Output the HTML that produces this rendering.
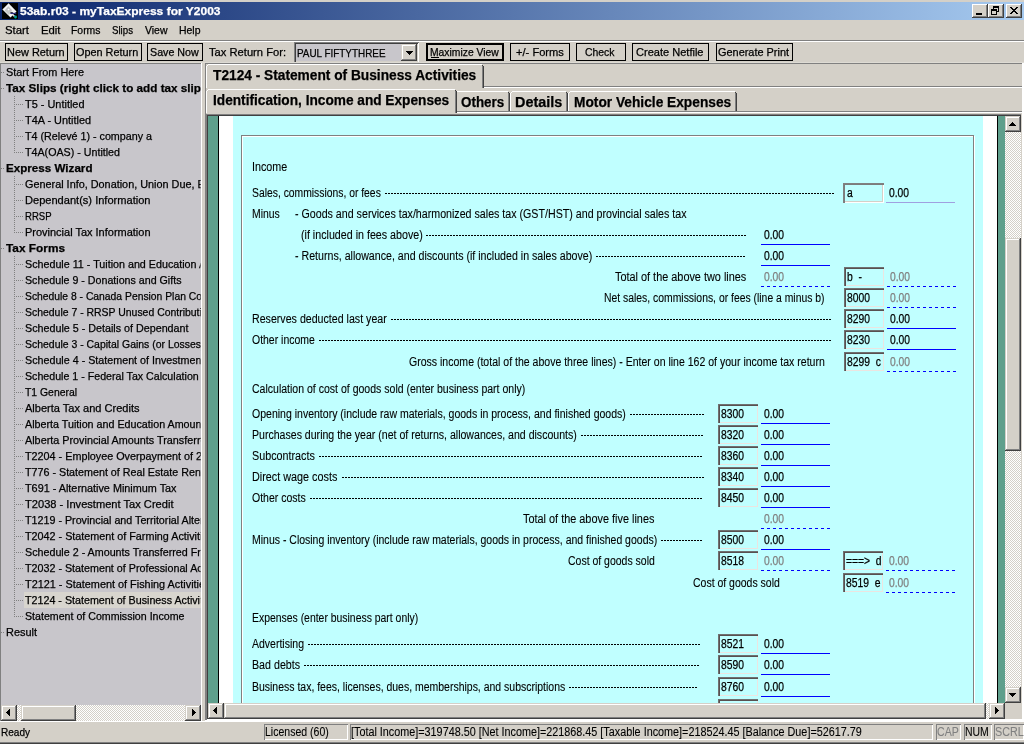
<!DOCTYPE html>
<html><head><meta charset="utf-8"><title>myTaxExpress</title>
<style>
html,body{margin:0;padding:0}
body{width:1024px;height:744px;background:#d4d0c8;position:relative;overflow:hidden;font-family:'Liberation Sans',sans-serif}
div,svg,span{position:absolute;display:block}
span{white-space:pre;transform-origin:0 0;-webkit-text-stroke:0.25px currentColor}
</style></head><body>
<div style="left:0px;top:2px;width:1024px;height:18px;background:linear-gradient(to right,#0a246a 0%,#a6caf0 100%);"></div>
<svg style="left:2px;top:3px" width="16" height="16" viewBox="0 0 16 16"><rect width="16" height="16" fill="#000"/><path d="M6.6 0.3 L14.5 8.5 L8.5 14.5 L0.4 6.6 Z" fill="#f4f4f4"/><path d="M6.3 3.2 L10 7 L9 10 L6.8 12 L2.6 7.4Z" fill="#c6c6c6"/><path d="M5.5 6.6l1.2 -1.2 1 1 -1.2 1.2z" fill="#fff"/><path d="M8.7 9.1 L10.8 8.9 L10.9 9.8 L8.4 9.8Z" fill="#000"/><path d="M8.4 10.4 L14.2 10.4" stroke="#2c2c7c" stroke-width="1.2"/><path d="M9.6 11.5l2 0 1.6 1.6 -1.2 1z" fill="#e0e0e0"/><circle cx="13.5" cy="14" r="1.45" fill="#00a098"/><path d="M12.3 15.2h2.4l-1.2 0.8z" fill="#008000"/></svg>
<div style="left:972px;top:4px;width:16px;height:14px;background:#d4d0c8;box-shadow:inset -1px -1px 0 #404040,inset 1px 1px 0 #fff,inset -2px -2px 0 #808080"></div>
<div style="left:976px;top:13px;width:6px;height:2px;background:#000;"></div>
<div style="left:988px;top:4px;width:16px;height:14px;background:#d4d0c8;box-shadow:inset -1px -1px 0 #404040,inset 1px 1px 0 #fff,inset -2px -2px 0 #808080"></div>
<svg style="left:991px;top:6px" width="8" height="9" shape-rendering="crispEdges"><path d="M2 0h6v1h-6zM2 1h6v1h-6zM2 2h1v1h-1zM7 2h1v1h-1zM0 3h6v1h-6zM7 3h1v1h-1zM0 4h6v1h-6zM7 4h1v1h-1zM0 5h1v1h-1zM5 5h3v1h-3zM0 6h1v1h-1zM5 6h1v1h-1zM0 7h1v1h-1zM5 7h1v1h-1zM0 8h6v1h-6z" fill="#000"/></svg>
<div style="left:1006px;top:4px;width:16px;height:14px;background:#d4d0c8;box-shadow:inset -1px -1px 0 #404040,inset 1px 1px 0 #fff,inset -2px -2px 0 #808080"></div>
<svg style="left:1010px;top:7px" width="8" height="7" shape-rendering="crispEdges"><path d="M0 0h2v1h-2zM6 0h2v1h-2zM1 1h2v1h-2zM5 1h2v1h-2zM2 2h4v1h-4zM3 3h2v1h-2zM2 4h4v1h-4zM1 5h2v1h-2zM5 5h2v1h-2zM0 6h2v1h-2zM6 6h2v1h-2z" fill="#000"/></svg>
<div style="left:0px;top:40px;width:1024px;height:1px;background:#808080;"></div>
<div style="left:0px;top:41px;width:1024px;height:1px;background:#fff;"></div>
<div style="left:5px;top:43px;width:63px;height:18px;background:#000;"></div>
<div style="left:6px;top:44px;width:61px;height:16px;background:#d4d0c8;"></div>
<div style="left:74px;top:43px;width:68px;height:18px;background:#000;"></div>
<div style="left:75px;top:44px;width:66px;height:16px;background:#d4d0c8;"></div>
<div style="left:147px;top:43px;width:56px;height:18px;background:#000;"></div>
<div style="left:148px;top:44px;width:54px;height:16px;background:#d4d0c8;"></div>
<div style="left:294px;top:42px;width:125px;height:21px;background:#c8c6cb;box-shadow:inset 1px 1px 0 #808080,inset -1px -1px 0 #fff,inset 2px 2px 0 #404040,inset -2px -2px 0 #d4d0c8"></div>
<div style="left:401px;top:44px;width:16px;height:17px;background:#d4d0c8;box-shadow:inset -1px -1px 0 #404040,inset 1px 1px 0 #d4d0c8,inset -2px -2px 0 #808080,inset 2px 2px 0 #fff"></div>
<svg style="left:406px;top:51px" width="7" height="4" shape-rendering="crispEdges"><path d="M0 0h7v1h-7zM1 1h5v1h-5zM2 2h3v1h-3zM3 3h1v1h-1z" fill="#000"/></svg>
<div style="left:426px;top:43px;width:78px;height:18px;background:#000;"></div>
<div style="left:428px;top:45px;width:74px;height:14px;background:#d4d0c8;"></div>
<div style="left:431px;top:57px;width:8px;height:1px;background:#000;"></div>
<div style="left:510px;top:43px;width:60px;height:18px;background:#000;"></div>
<div style="left:511px;top:44px;width:58px;height:16px;background:#d4d0c8;"></div>
<div style="left:576px;top:43px;width:50px;height:18px;background:#000;"></div>
<div style="left:577px;top:44px;width:48px;height:16px;background:#d4d0c8;"></div>
<div style="left:632px;top:43px;width:77px;height:18px;background:#000;"></div>
<div style="left:633px;top:44px;width:75px;height:16px;background:#d4d0c8;"></div>
<div style="left:716px;top:43px;width:77px;height:18px;background:#000;"></div>
<div style="left:717px;top:44px;width:75px;height:16px;background:#d4d0c8;"></div>
<div style="left:0px;top:63px;width:201px;height:1px;background:#808080;"></div>
<div style="left:205px;top:63px;width:817px;height:1px;background:#808080;"></div>
<div style="left:205px;top:63px;width:1px;height:658px;background:#808080;"></div>
<div style="left:1022px;top:63px;width:2px;height:659px;background:#fff;"></div>
<div style="left:0px;top:62px;width:1024px;height:1px;background:#dedbd4;"></div>
<div style="left:0px;top:64px;width:1px;height:657px;background:#808080;"></div>
<div style="left:1px;top:64px;width:200px;height:641px;background:#c8c6cb;"></div>
<div style="left:201px;top:63px;width:1px;height:659px;background:#fff;"></div>
<div style="left:0px;top:721px;width:202px;height:1px;background:#fff;"></div>
<div style="left:1px;top:72px;width:4px;height:1px;background:repeating-linear-gradient(to right,#808080 0,#808080 1px,transparent 1px,transparent 2px)"></div>
<div style="left:1px;top:88px;width:4px;height:1px;background:repeating-linear-gradient(to right,#808080 0,#808080 1px,transparent 1px,transparent 2px)"></div>
<div style="left:14px;top:104px;width:9px;height:1px;background:repeating-linear-gradient(to right,#808080 0,#808080 1px,transparent 1px,transparent 2px)"></div>
<div style="left:14px;top:120px;width:9px;height:1px;background:repeating-linear-gradient(to right,#808080 0,#808080 1px,transparent 1px,transparent 2px)"></div>
<div style="left:14px;top:136px;width:9px;height:1px;background:repeating-linear-gradient(to right,#808080 0,#808080 1px,transparent 1px,transparent 2px)"></div>
<div style="left:14px;top:152px;width:9px;height:1px;background:repeating-linear-gradient(to right,#808080 0,#808080 1px,transparent 1px,transparent 2px)"></div>
<div style="left:1px;top:168px;width:4px;height:1px;background:repeating-linear-gradient(to right,#808080 0,#808080 1px,transparent 1px,transparent 2px)"></div>
<div style="left:14px;top:184px;width:9px;height:1px;background:repeating-linear-gradient(to right,#808080 0,#808080 1px,transparent 1px,transparent 2px)"></div>
<div style="left:14px;top:200px;width:9px;height:1px;background:repeating-linear-gradient(to right,#808080 0,#808080 1px,transparent 1px,transparent 2px)"></div>
<div style="left:14px;top:216px;width:9px;height:1px;background:repeating-linear-gradient(to right,#808080 0,#808080 1px,transparent 1px,transparent 2px)"></div>
<div style="left:14px;top:232px;width:9px;height:1px;background:repeating-linear-gradient(to right,#808080 0,#808080 1px,transparent 1px,transparent 2px)"></div>
<div style="left:1px;top:248px;width:4px;height:1px;background:repeating-linear-gradient(to right,#808080 0,#808080 1px,transparent 1px,transparent 2px)"></div>
<div style="left:14px;top:264px;width:9px;height:1px;background:repeating-linear-gradient(to right,#808080 0,#808080 1px,transparent 1px,transparent 2px)"></div>
<div style="left:14px;top:280px;width:9px;height:1px;background:repeating-linear-gradient(to right,#808080 0,#808080 1px,transparent 1px,transparent 2px)"></div>
<div style="left:14px;top:296px;width:9px;height:1px;background:repeating-linear-gradient(to right,#808080 0,#808080 1px,transparent 1px,transparent 2px)"></div>
<div style="left:14px;top:312px;width:9px;height:1px;background:repeating-linear-gradient(to right,#808080 0,#808080 1px,transparent 1px,transparent 2px)"></div>
<div style="left:14px;top:328px;width:9px;height:1px;background:repeating-linear-gradient(to right,#808080 0,#808080 1px,transparent 1px,transparent 2px)"></div>
<div style="left:14px;top:344px;width:9px;height:1px;background:repeating-linear-gradient(to right,#808080 0,#808080 1px,transparent 1px,transparent 2px)"></div>
<div style="left:14px;top:360px;width:9px;height:1px;background:repeating-linear-gradient(to right,#808080 0,#808080 1px,transparent 1px,transparent 2px)"></div>
<div style="left:14px;top:376px;width:9px;height:1px;background:repeating-linear-gradient(to right,#808080 0,#808080 1px,transparent 1px,transparent 2px)"></div>
<div style="left:14px;top:392px;width:9px;height:1px;background:repeating-linear-gradient(to right,#808080 0,#808080 1px,transparent 1px,transparent 2px)"></div>
<div style="left:14px;top:408px;width:9px;height:1px;background:repeating-linear-gradient(to right,#808080 0,#808080 1px,transparent 1px,transparent 2px)"></div>
<div style="left:14px;top:424px;width:9px;height:1px;background:repeating-linear-gradient(to right,#808080 0,#808080 1px,transparent 1px,transparent 2px)"></div>
<div style="left:14px;top:440px;width:9px;height:1px;background:repeating-linear-gradient(to right,#808080 0,#808080 1px,transparent 1px,transparent 2px)"></div>
<div style="left:14px;top:456px;width:9px;height:1px;background:repeating-linear-gradient(to right,#808080 0,#808080 1px,transparent 1px,transparent 2px)"></div>
<div style="left:14px;top:472px;width:9px;height:1px;background:repeating-linear-gradient(to right,#808080 0,#808080 1px,transparent 1px,transparent 2px)"></div>
<div style="left:14px;top:488px;width:9px;height:1px;background:repeating-linear-gradient(to right,#808080 0,#808080 1px,transparent 1px,transparent 2px)"></div>
<div style="left:14px;top:504px;width:9px;height:1px;background:repeating-linear-gradient(to right,#808080 0,#808080 1px,transparent 1px,transparent 2px)"></div>
<div style="left:14px;top:520px;width:9px;height:1px;background:repeating-linear-gradient(to right,#808080 0,#808080 1px,transparent 1px,transparent 2px)"></div>
<div style="left:14px;top:536px;width:9px;height:1px;background:repeating-linear-gradient(to right,#808080 0,#808080 1px,transparent 1px,transparent 2px)"></div>
<div style="left:14px;top:552px;width:9px;height:1px;background:repeating-linear-gradient(to right,#808080 0,#808080 1px,transparent 1px,transparent 2px)"></div>
<div style="left:14px;top:568px;width:9px;height:1px;background:repeating-linear-gradient(to right,#808080 0,#808080 1px,transparent 1px,transparent 2px)"></div>
<div style="left:14px;top:584px;width:9px;height:1px;background:repeating-linear-gradient(to right,#808080 0,#808080 1px,transparent 1px,transparent 2px)"></div>
<div style="left:24px;top:592px;width:177px;height:16px;background:#d8d5ce"></div>
<div style="left:14px;top:600px;width:9px;height:1px;background:repeating-linear-gradient(to right,#808080 0,#808080 1px,transparent 1px,transparent 2px)"></div>
<div style="left:14px;top:616px;width:9px;height:1px;background:repeating-linear-gradient(to right,#808080 0,#808080 1px,transparent 1px,transparent 2px)"></div>
<div style="left:1px;top:632px;width:4px;height:1px;background:repeating-linear-gradient(to right,#808080 0,#808080 1px,transparent 1px,transparent 2px)"></div>
<div style="left:14px;top:96px;width:1px;height:57px;background:repeating-linear-gradient(to bottom,#808080 0,#808080 1px,transparent 1px,transparent 2px)"></div>
<div style="left:14px;top:176px;width:1px;height:57px;background:repeating-linear-gradient(to bottom,#808080 0,#808080 1px,transparent 1px,transparent 2px)"></div>
<div style="left:14px;top:256px;width:1px;height:361px;background:repeating-linear-gradient(to bottom,#808080 0,#808080 1px,transparent 1px,transparent 2px)"></div>
<div style="left:1px;top:705px;width:200px;height:16px;background:repeating-conic-gradient(#fff 0% 25%, #d4d0c8 0% 50%) 0 0/2px 2px;"></div>
<div style="left:1px;top:705px;width:16px;height:16px;background:#d4d0c8;box-shadow:inset -1px -1px 0 #404040,inset 1px 1px 0 #d4d0c8,inset -2px -2px 0 #808080,inset 2px 2px 0 #fff"></div>
<svg style="left:6px;top:709px" width="4" height="7" shape-rendering="crispEdges"><path d="M3 0h1v1h-1zM2 1h2v1h-2zM1 2h3v1h-3zM0 3h4v1h-4zM1 4h3v1h-3zM2 5h2v1h-2zM3 6h1v1h-1z" fill="#000"/></svg>
<div style="left:21px;top:705px;width:55px;height:16px;background:#d4d0c8;box-shadow:inset -1px -1px 0 #404040,inset 1px 1px 0 #d4d0c8,inset -2px -2px 0 #808080,inset 2px 2px 0 #fff"></div>
<div style="left:185px;top:705px;width:16px;height:16px;background:#d4d0c8;box-shadow:inset -1px -1px 0 #404040,inset 1px 1px 0 #d4d0c8,inset -2px -2px 0 #808080,inset 2px 2px 0 #fff"></div>
<svg style="left:192px;top:709px" width="4" height="7" shape-rendering="crispEdges"><path d="M0 0h1v1h-1zM0 1h2v1h-2zM0 2h3v1h-3zM0 3h4v1h-4zM0 4h3v1h-3zM0 5h2v1h-2zM0 6h1v1h-1z" fill="#000"/></svg>
<div style="left:206px;top:66px;width:1px;height:22px;background:#fff;"></div>
<div style="left:207px;top:65px;width:1px;height:1px;background:#fff;"></div>
<div style="left:208px;top:64px;width:274px;height:1px;background:#fff;"></div>
<div style="left:482px;top:65px;width:1px;height:1px;background:#404040;"></div>
<div style="left:483px;top:66px;width:1px;height:22px;background:#404040;"></div>
<div style="left:482px;top:66px;width:1px;height:22px;background:#808080;"></div>
<div style="left:484px;top:86px;width:538px;height:1px;background:#808080;"></div>
<div style="left:484px;top:87px;width:538px;height:1px;background:#fff;"></div>
<div style="left:457px;top:91px;width:51px;height:1px;background:#fff;"></div>
<div style="left:508px;top:92px;width:1px;height:1px;background:#404040;"></div>
<div style="left:509px;top:93px;width:1px;height:18px;background:#404040;"></div>
<div style="left:508px;top:93px;width:1px;height:18px;background:#808080;"></div>
<div style="left:510px;top:93px;width:1px;height:18px;background:#fff;"></div>
<div style="left:511px;top:92px;width:1px;height:1px;background:#fff;"></div>
<div style="left:512px;top:91px;width:54px;height:1px;background:#fff;"></div>
<div style="left:566px;top:92px;width:1px;height:1px;background:#404040;"></div>
<div style="left:567px;top:93px;width:1px;height:18px;background:#404040;"></div>
<div style="left:566px;top:93px;width:1px;height:18px;background:#808080;"></div>
<div style="left:568px;top:93px;width:1px;height:18px;background:#fff;"></div>
<div style="left:569px;top:92px;width:1px;height:1px;background:#fff;"></div>
<div style="left:570px;top:91px;width:165px;height:1px;background:#fff;"></div>
<div style="left:735px;top:92px;width:1px;height:1px;background:#404040;"></div>
<div style="left:736px;top:93px;width:1px;height:18px;background:#404040;"></div>
<div style="left:735px;top:93px;width:1px;height:18px;background:#808080;"></div>
<div style="left:457px;top:111px;width:565px;height:1px;background:#808080;"></div>
<div style="left:457px;top:112px;width:565px;height:1px;background:#fff;"></div>
<div style="left:206px;top:91px;width:1px;height:22px;background:#fff;"></div>
<div style="left:207px;top:90px;width:1px;height:1px;background:#fff;"></div>
<div style="left:208px;top:89px;width:247px;height:1px;background:#fff;"></div>
<div style="left:455px;top:90px;width:1px;height:1px;background:#404040;"></div>
<div style="left:456px;top:91px;width:1px;height:22px;background:#404040;"></div>
<div style="left:455px;top:91px;width:1px;height:22px;background:#808080;"></div>
<div style="left:206px;top:114px;width:816px;height:606px;background:#808080;"></div>
<div style="left:207px;top:115px;width:815px;height:605px;background:#404040;"></div>
<div style="left:1021px;top:114px;width:1px;height:607px;background:#d4d0c8;"></div>
<div style="left:205px;top:720px;width:819px;height:2px;background:#fff;"></div>
<div style="left:207px;top:719px;width:815px;height:1px;background:#fff;"></div>
<div style="left:208px;top:116px;width:813px;height:603px;background:#d4d0c8;"></div>
<div style="left:208px;top:116px;width:797px;height:587px;background:#5f9f8c;"></div>
<div style="left:218px;top:116px;width:780px;height:587px;background:#000;"></div>
<div style="left:219px;top:116px;width:778px;height:587px;background:#fff;"></div>
<div style="left:233px;top:116px;width:750px;height:587px;background:#c0ffff;"></div>
<div style="left:241px;top:135px;width:733px;height:600px;border:1px solid #808080;box-shadow:inset 1px 1px 0 #fff,1px 1px 0 #fff;box-sizing:border-box;clip-path:inset(0 -1px 32px 0)"></div>
<div style="left:1005px;top:116px;width:16px;height:587px;background:repeating-conic-gradient(#d4d0c8 0% 25%, #fff 0% 50%) 0 0/2px 2px;"></div>
<div style="left:1005px;top:116px;width:16px;height:16px;background:#d4d0c8;box-shadow:inset -1px -1px 0 #404040,inset 1px 1px 0 #d4d0c8,inset -2px -2px 0 #808080,inset 2px 2px 0 #fff"></div>
<svg style="left:1009px;top:122px" width="7" height="4" shape-rendering="crispEdges"><path d="M3 0h1v1h-1zM2 1h3v1h-3zM1 2h5v1h-5zM0 3h7v1h-7z" fill="#000"/></svg>
<div style="left:1005px;top:238px;width:16px;height:213px;background:#d4d0c8;box-shadow:inset -1px -1px 0 #404040,inset 1px 1px 0 #d4d0c8,inset -2px -2px 0 #808080,inset 2px 2px 0 #fff"></div>
<div style="left:1005px;top:687px;width:16px;height:16px;background:#d4d0c8;box-shadow:inset -1px -1px 0 #404040,inset 1px 1px 0 #d4d0c8,inset -2px -2px 0 #808080,inset 2px 2px 0 #fff"></div>
<svg style="left:1009px;top:693px" width="7" height="4" shape-rendering="crispEdges"><path d="M0 0h7v1h-7zM1 1h5v1h-5zM2 2h3v1h-3zM3 3h1v1h-1z" fill="#000"/></svg>
<div style="left:208px;top:703px;width:797px;height:16px;background:repeating-conic-gradient(#fff 0% 25%, #d4d0c8 0% 50%) 0 0/2px 2px;"></div>
<div style="left:208px;top:703px;width:16px;height:16px;background:#d4d0c8;box-shadow:inset -1px -1px 0 #404040,inset 1px 1px 0 #d4d0c8,inset -2px -2px 0 #808080,inset 2px 2px 0 #fff"></div>
<svg style="left:213px;top:707px" width="4" height="7" shape-rendering="crispEdges"><path d="M3 0h1v1h-1zM2 1h2v1h-2zM1 2h3v1h-3zM0 3h4v1h-4zM1 4h3v1h-3zM2 5h2v1h-2zM3 6h1v1h-1z" fill="#000"/></svg>
<div style="left:224px;top:703px;width:762px;height:16px;background:#d4d0c8;box-shadow:inset -1px -1px 0 #404040,inset 1px 1px 0 #d4d0c8,inset -2px -2px 0 #808080,inset 2px 2px 0 #fff"></div>
<div style="left:989px;top:703px;width:16px;height:16px;background:#d4d0c8;box-shadow:inset -1px -1px 0 #404040,inset 1px 1px 0 #d4d0c8,inset -2px -2px 0 #808080,inset 2px 2px 0 #fff"></div>
<svg style="left:995px;top:707px" width="4" height="7" shape-rendering="crispEdges"><path d="M0 0h1v1h-1zM0 1h2v1h-2zM0 2h3v1h-3zM0 3h4v1h-4zM0 4h3v1h-3zM0 5h2v1h-2zM0 6h1v1h-1z" fill="#000"/></svg>
<div style="left:385px;top:193px;width:449px;height:1px;background:repeating-linear-gradient(to right,#000 0,#000 2px,transparent 2px,transparent 3px);"></div>
<div style="left:843px;top:183px;width:41px;height:20px;background:#c0ffff;box-shadow:inset 1px 1px 0 #808080,inset 2px 2px 0 #7c7c7c,inset -1px -1px 0 #fff,inset -2px -2px 0 #d4d0c8"></div>
<div style="left:886px;top:202px;width:69px;height:1px;background:#a0a0e0;"></div>
<div style="left:426px;top:235px;width:320px;height:1px;background:repeating-linear-gradient(to right,#000 0,#000 2px,transparent 2px,transparent 3px);"></div>
<div style="left:761px;top:244px;width:69px;height:1px;background:#0000ff;"></div>
<div style="left:596px;top:256px;width:149px;height:1px;background:repeating-linear-gradient(to right,#000 0,#000 2px,transparent 2px,transparent 3px);"></div>
<div style="left:761px;top:265px;width:69px;height:1px;background:#0000ff;"></div>
<div style="left:761px;top:286px;width:69px;height:1px;background:repeating-linear-gradient(to right,#0000ff 0,#0000ff 3px,transparent 3px,transparent 6px);"></div>
<div style="left:844px;top:267px;width:40px;height:19px;background:#c0ffff;box-shadow:inset 1px 1px 0 #707070,inset 2px 2px 0 #585050,inset -1px -1px 0 #ece4e0"></div>
<div style="left:887px;top:286px;width:69px;height:1px;background:repeating-linear-gradient(to right,#0000ff 0,#0000ff 3px,transparent 3px,transparent 6px);"></div>
<div style="left:844px;top:288px;width:40px;height:19px;background:#c0ffff;box-shadow:inset 1px 1px 0 #707070,inset 2px 2px 0 #585050,inset -1px -1px 0 #ece4e0"></div>
<div style="left:887px;top:307px;width:69px;height:1px;background:repeating-linear-gradient(to right,#0000ff 0,#0000ff 3px,transparent 3px,transparent 6px);"></div>
<div style="left:391px;top:319px;width:440px;height:1px;background:repeating-linear-gradient(to right,#000 0,#000 2px,transparent 2px,transparent 3px);"></div>
<div style="left:844px;top:309px;width:40px;height:19px;background:#c0ffff;box-shadow:inset 1px 1px 0 #707070,inset 2px 2px 0 #585050,inset -1px -1px 0 #ece4e0"></div>
<div style="left:887px;top:328px;width:69px;height:1px;background:#0000ff;"></div>
<div style="left:319px;top:340px;width:512px;height:1px;background:repeating-linear-gradient(to right,#000 0,#000 2px,transparent 2px,transparent 3px);"></div>
<div style="left:844px;top:330px;width:40px;height:19px;background:#c0ffff;box-shadow:inset 1px 1px 0 #707070,inset 2px 2px 0 #585050,inset -1px -1px 0 #ece4e0"></div>
<div style="left:887px;top:349px;width:69px;height:1px;background:#0000ff;"></div>
<div style="left:844px;top:352px;width:40px;height:19px;background:#c0ffff;box-shadow:inset 1px 1px 0 #707070,inset 2px 2px 0 #585050,inset -1px -1px 0 #ece4e0"></div>
<div style="left:887px;top:371px;width:69px;height:1px;background:repeating-linear-gradient(to right,#0000ff 0,#0000ff 3px,transparent 3px,transparent 6px);"></div>
<div style="left:630px;top:414px;width:74px;height:1px;background:repeating-linear-gradient(to right,#000 0,#000 2px,transparent 2px,transparent 3px);"></div>
<div style="left:718px;top:404px;width:40px;height:19px;background:#c0ffff;box-shadow:inset 1px 1px 0 #707070,inset 2px 2px 0 #585050,inset -1px -1px 0 #ece4e0"></div>
<div style="left:761px;top:423px;width:69px;height:1px;background:#0000ff;"></div>
<div style="left:581px;top:435px;width:122px;height:1px;background:repeating-linear-gradient(to right,#000 0,#000 2px,transparent 2px,transparent 3px);"></div>
<div style="left:718px;top:425px;width:40px;height:19px;background:#c0ffff;box-shadow:inset 1px 1px 0 #707070,inset 2px 2px 0 #585050,inset -1px -1px 0 #ece4e0"></div>
<div style="left:761px;top:444px;width:69px;height:1px;background:#0000ff;"></div>
<div style="left:319px;top:456px;width:383px;height:1px;background:repeating-linear-gradient(to right,#000 0,#000 2px,transparent 2px,transparent 3px);"></div>
<div style="left:718px;top:446px;width:40px;height:19px;background:#c0ffff;box-shadow:inset 1px 1px 0 #707070,inset 2px 2px 0 #585050,inset -1px -1px 0 #ece4e0"></div>
<div style="left:761px;top:465px;width:69px;height:1px;background:#0000ff;"></div>
<div style="left:342px;top:477px;width:362px;height:1px;background:repeating-linear-gradient(to right,#000 0,#000 2px,transparent 2px,transparent 3px);"></div>
<div style="left:718px;top:467px;width:40px;height:19px;background:#c0ffff;box-shadow:inset 1px 1px 0 #707070,inset 2px 2px 0 #585050,inset -1px -1px 0 #ece4e0"></div>
<div style="left:761px;top:486px;width:69px;height:1px;background:#0000ff;"></div>
<div style="left:310px;top:498px;width:392px;height:1px;background:repeating-linear-gradient(to right,#000 0,#000 2px,transparent 2px,transparent 3px);"></div>
<div style="left:718px;top:488px;width:40px;height:19px;background:#c0ffff;box-shadow:inset 1px 1px 0 #707070,inset 2px 2px 0 #585050,inset -1px -1px 0 #ece4e0"></div>
<div style="left:761px;top:507px;width:69px;height:1px;background:#0000ff;"></div>
<div style="left:761px;top:528px;width:69px;height:1px;background:repeating-linear-gradient(to right,#0000ff 0,#0000ff 3px,transparent 3px,transparent 6px);"></div>
<div style="left:661px;top:540px;width:41px;height:1px;background:repeating-linear-gradient(to right,#000 0,#000 2px,transparent 2px,transparent 3px);"></div>
<div style="left:718px;top:530px;width:40px;height:19px;background:#c0ffff;box-shadow:inset 1px 1px 0 #707070,inset 2px 2px 0 #585050,inset -1px -1px 0 #ece4e0"></div>
<div style="left:761px;top:549px;width:69px;height:1px;background:#0000ff;"></div>
<div style="left:718px;top:551px;width:40px;height:19px;background:#c0ffff;box-shadow:inset 1px 1px 0 #707070,inset 2px 2px 0 #585050,inset -1px -1px 0 #ece4e0"></div>
<div style="left:761px;top:570px;width:69px;height:1px;background:repeating-linear-gradient(to right,#0000ff 0,#0000ff 3px,transparent 3px,transparent 6px);"></div>
<div style="left:843px;top:551px;width:40px;height:19px;background:#c0ffff;box-shadow:inset 1px 1px 0 #707070,inset 2px 2px 0 #585050,inset -1px -1px 0 #ece4e0"></div>
<div style="left:886px;top:570px;width:69px;height:1px;background:repeating-linear-gradient(to right,#0000ff 0,#0000ff 3px,transparent 3px,transparent 6px);"></div>
<div style="left:843px;top:573px;width:40px;height:19px;background:#c0ffff;box-shadow:inset 1px 1px 0 #707070,inset 2px 2px 0 #585050,inset -1px -1px 0 #ece4e0"></div>
<div style="left:886px;top:592px;width:69px;height:1px;background:repeating-linear-gradient(to right,#0000ff 0,#0000ff 3px,transparent 3px,transparent 6px);"></div>
<div style="left:308px;top:644px;width:392px;height:1px;background:repeating-linear-gradient(to right,#000 0,#000 2px,transparent 2px,transparent 3px);"></div>
<div style="left:718px;top:634px;width:40px;height:19px;background:#c0ffff;box-shadow:inset 1px 1px 0 #707070,inset 2px 2px 0 #585050,inset -1px -1px 0 #ece4e0"></div>
<div style="left:761px;top:653px;width:69px;height:1px;background:#0000ff;"></div>
<div style="left:304px;top:665px;width:395px;height:1px;background:repeating-linear-gradient(to right,#000 0,#000 2px,transparent 2px,transparent 3px);"></div>
<div style="left:718px;top:655px;width:40px;height:19px;background:#c0ffff;box-shadow:inset 1px 1px 0 #707070,inset 2px 2px 0 #585050,inset -1px -1px 0 #ece4e0"></div>
<div style="left:761px;top:674px;width:69px;height:1px;background:#0000ff;"></div>
<div style="left:569px;top:687px;width:128px;height:1px;background:repeating-linear-gradient(to right,#000 0,#000 2px,transparent 2px,transparent 3px);"></div>
<div style="left:718px;top:677px;width:40px;height:19px;background:#c0ffff;box-shadow:inset 1px 1px 0 #707070,inset 2px 2px 0 #585050,inset -1px -1px 0 #ece4e0"></div>
<div style="left:761px;top:696px;width:69px;height:1px;background:#0000ff;"></div>
<div style="left:718px;top:699px;width:40px;height:4px;background:#c0ffff;box-shadow:inset 1px 1px 0 #707070,inset 2px 2px 0 #585050,inset -1px 0 0 #ece4e0"></div>
<div style="left:0px;top:721px;width:1024px;height:1px;background:#fff;"></div>
<div style="left:264px;top:724px;width:84px;height:16px;background:#d4d0c8;box-shadow:inset 1px 1px 0 #808080,inset -1px -1px 0 #fff"></div>
<div style="left:350px;top:724px;width:583px;height:16px;background:#d4d0c8;box-shadow:inset 1px 1px 0 #808080,inset -1px -1px 0 #fff"></div>
<div style="left:936px;top:724px;width:25px;height:16px;background:#d4d0c8;box-shadow:inset 1px 1px 0 #808080,inset -1px -1px 0 #fff"></div>
<div style="left:964px;top:724px;width:28px;height:16px;background:#d4d0c8;box-shadow:inset 1px 1px 0 #808080,inset -1px -1px 0 #fff"></div>
<div style="left:994px;top:724px;width:30px;height:16px;background:#d4d0c8;box-shadow:inset 1px 1px 0 #808080,inset -1px -1px 0 #fff"></div>
<div style="left:0px;top:742px;width:1024px;height:1px;background:#808080;"></div>
<div style="left:0px;top:743px;width:1024px;height:1px;background:#404040;"></div>
<div style="left:0;top:0;width:1024px;height:744px;will-change:transform">
<span style="left:20.00px;top:4.69px;font-size:11px;line-height:13px;transform:scaleX(1.0917);color:#fff;font-weight:bold;">53ab.r03 - myTaxExpress for Y2003</span>
<span style="left:5.40px;top:23.69px;font-size:11px;line-height:13px;transform:scaleX(1.0330);color:#000;">Start</span>
<span style="left:40.90px;top:23.69px;font-size:11px;line-height:13px;transform:scaleX(1.0280);color:#000;">Edit</span>
<span style="left:70.90px;top:23.69px;font-size:11px;line-height:13px;transform:scaleX(0.9464);color:#000;">Forms</span>
<span style="left:112.40px;top:23.69px;font-size:11px;line-height:13px;transform:scaleX(0.8807);color:#000;">Slips</span>
<span style="left:144.90px;top:23.69px;font-size:11px;line-height:13px;transform:scaleX(0.9511);color:#000;">View</span>
<span style="left:178.90px;top:23.69px;font-size:11px;line-height:13px;transform:scaleX(0.9503);color:#000;">Help</span>
<span style="left:7.10px;top:45.69px;font-size:11px;line-height:13px;transform:scaleX(0.9935);color:#000;">New Return</span>
<span style="left:76.30px;top:45.69px;font-size:11px;line-height:13px;transform:scaleX(0.9875);color:#000;">Open Return</span>
<span style="left:149.80px;top:45.69px;font-size:11px;line-height:13px;transform:scaleX(0.9713);color:#000;">Save Now</span>
<span style="left:209.40px;top:45.69px;font-size:11px;line-height:13px;transform:scaleX(1.0157);color:#000;">Tax Return For:</span>
<span style="left:296.90px;top:46.69px;font-size:11px;line-height:13px;transform:scaleX(0.8993);color:#000;">PAUL FIFTYTHREE</span>
<span style="left:430.30px;top:45.69px;font-size:11px;line-height:13px;transform:scaleX(0.9391);color:#000;">Maximize View</span>
<span style="left:515.60px;top:45.69px;font-size:11px;line-height:13px;transform:scaleX(1.0111);color:#000;">+/- Forms</span>
<span style="left:585.40px;top:45.69px;font-size:11px;line-height:13px;transform:scaleX(0.9459);color:#000;">Check</span>
<span style="left:636.40px;top:45.69px;font-size:11px;line-height:13px;transform:scaleX(1.0035);color:#000;">Create Netfile</span>
<span style="left:717.90px;top:45.69px;font-size:11px;line-height:13px;transform:scaleX(0.9924);color:#000;">Generate Print</span>
<span style="left:6.40px;top:65.69px;font-size:11px;line-height:13px;transform:scaleX(0.9891);color:#000;width:196.74px;overflow:hidden;">Start From Here</span>
<span style="left:6.40px;top:81.69px;font-size:11px;line-height:13px;transform:scaleX(1.0646);color:#000;font-weight:bold;width:182.80px;overflow:hidden;">Tax Slips (right click to add tax slips)</span>
<span style="left:25.40px;top:97.69px;font-size:11px;line-height:13px;transform:scaleX(0.9930);color:#000;width:176.85px;overflow:hidden;">T5 - Untitled</span>
<span style="left:25.40px;top:113.69px;font-size:11px;line-height:13px;transform:scaleX(0.9904);color:#000;width:177.30px;overflow:hidden;">T4A - Untitled</span>
<span style="left:25.40px;top:129.69px;font-size:11px;line-height:13px;transform:scaleX(0.9753);color:#000;width:180.05px;overflow:hidden;">T4 (Relevé 1) - company a</span>
<span style="left:25.40px;top:145.69px;font-size:11px;line-height:13px;transform:scaleX(0.9712);color:#000;width:180.80px;overflow:hidden;">T4A(OAS) - Untitled</span>
<span style="left:6.40px;top:161.69px;font-size:11px;line-height:13px;transform:scaleX(1.0571);color:#000;font-weight:bold;width:184.09px;overflow:hidden;">Express Wizard</span>
<span style="left:25.40px;top:177.69px;font-size:11px;line-height:13px;transform:scaleX(0.9863);color:#000;width:178.03px;overflow:hidden;">General Info, Donation, Union Due, Etc</span>
<span style="left:25.40px;top:193.69px;font-size:11px;line-height:13px;transform:scaleX(1.0061);color:#000;width:174.53px;overflow:hidden;">Dependant(s) Information</span>
<span style="left:25.40px;top:209.69px;font-size:11px;line-height:13px;transform:scaleX(0.8671);color:#000;width:202.52px;overflow:hidden;">RRSP</span>
<span style="left:25.40px;top:225.69px;font-size:11px;line-height:13px;transform:scaleX(0.9980);color:#000;width:175.95px;overflow:hidden;">Provincial Tax Information</span>
<span style="left:6.40px;top:241.69px;font-size:11px;line-height:13px;transform:scaleX(1.0764);color:#000;font-weight:bold;width:180.79px;overflow:hidden;">Tax Forms</span>
<span style="left:25.40px;top:257.69px;font-size:11px;line-height:13px;transform:scaleX(0.9749);color:#000;width:180.11px;overflow:hidden;">Schedule 11 - Tuition and Education Amounts</span>
<span style="left:25.40px;top:273.69px;font-size:11px;line-height:13px;transform:scaleX(0.9694);color:#000;width:181.14px;overflow:hidden;">Schedule 9 - Donations and Gifts</span>
<span style="left:25.40px;top:289.69px;font-size:11px;line-height:13px;transform:scaleX(0.9397);color:#000;width:186.86px;overflow:hidden;">Schedule 8 - Canada Pension Plan Contributions</span>
<span style="left:25.40px;top:305.69px;font-size:11px;line-height:13px;transform:scaleX(0.9492);color:#000;width:185.00px;overflow:hidden;">Schedule 7 - RRSP Unused Contributions</span>
<span style="left:25.40px;top:321.69px;font-size:11px;line-height:13px;transform:scaleX(0.9758);color:#000;width:179.96px;overflow:hidden;">Schedule 5 - Details of Dependant</span>
<span style="left:25.40px;top:337.69px;font-size:11px;line-height:13px;transform:scaleX(0.9500);color:#000;width:184.84px;overflow:hidden;">Schedule 3 - Capital Gains (or Losses)</span>
<span style="left:25.40px;top:353.69px;font-size:11px;line-height:13px;transform:scaleX(0.9750);color:#000;width:180.10px;overflow:hidden;">Schedule 4 - Statement of Investment Income</span>
<span style="left:25.40px;top:369.69px;font-size:11px;line-height:13px;transform:scaleX(0.9675);color:#000;width:181.49px;overflow:hidden;">Schedule 1 - Federal Tax Calculation</span>
<span style="left:25.40px;top:385.69px;font-size:11px;line-height:13px;transform:scaleX(0.9449);color:#000;width:185.84px;overflow:hidden;">T1 General</span>
<span style="left:25.40px;top:401.69px;font-size:11px;line-height:13px;transform:scaleX(1.0031);color:#000;width:175.05px;overflow:hidden;">Alberta Tax and Credits</span>
<span style="left:25.40px;top:417.69px;font-size:11px;line-height:13px;transform:scaleX(0.9750);color:#000;width:180.10px;overflow:hidden;">Alberta Tuition and Education Amounts</span>
<span style="left:25.40px;top:433.69px;font-size:11px;line-height:13px;transform:scaleX(0.9830);color:#000;width:178.63px;overflow:hidden;">Alberta Provincial Amounts Transferred</span>
<span style="left:25.40px;top:449.69px;font-size:11px;line-height:13px;transform:scaleX(0.9813);color:#000;width:178.94px;overflow:hidden;">T2204 - Employee Overpayment of 2003</span>
<span style="left:25.40px;top:465.69px;font-size:11px;line-height:13px;transform:scaleX(0.9750);color:#000;width:180.10px;overflow:hidden;">T776 - Statement of Real Estate Rentals</span>
<span style="left:25.40px;top:481.69px;font-size:11px;line-height:13px;transform:scaleX(0.9847);color:#000;width:178.33px;overflow:hidden;">T691 - Alternative Minimum Tax</span>
<span style="left:25.40px;top:497.69px;font-size:11px;line-height:13px;transform:scaleX(1.0091);color:#000;width:174.01px;overflow:hidden;">T2038 - Investment Tax Credit</span>
<span style="left:25.40px;top:513.69px;font-size:11px;line-height:13px;transform:scaleX(0.9746);color:#000;width:180.18px;overflow:hidden;">T1219 - Provincial and Territorial Alternative</span>
<span style="left:25.40px;top:529.69px;font-size:11px;line-height:13px;transform:scaleX(0.9802);color:#000;width:179.14px;overflow:hidden;">T2042 - Statement of Farming Activities</span>
<span style="left:25.40px;top:545.69px;font-size:11px;line-height:13px;transform:scaleX(0.9750);color:#000;width:180.10px;overflow:hidden;">Schedule 2 - Amounts Transferred From</span>
<span style="left:25.40px;top:561.69px;font-size:11px;line-height:13px;transform:scaleX(0.9750);color:#000;width:180.10px;overflow:hidden;">T2032 - Statement of Professional Activities</span>
<span style="left:25.40px;top:577.69px;font-size:11px;line-height:13px;transform:scaleX(0.9881);color:#000;width:177.71px;overflow:hidden;">T2121 - Statement of Fishing Activities</span>
<span style="left:25.40px;top:593.69px;font-size:11px;line-height:13px;transform:scaleX(0.9735);color:#000;width:180.38px;overflow:hidden;">T2124 - Statement of Business Activities</span>
<span style="left:25.40px;top:609.69px;font-size:11px;line-height:13px;transform:scaleX(0.9662);color:#000;width:181.74px;overflow:hidden;">Statement of Commission Income</span>
<span style="left:6.40px;top:625.69px;font-size:11px;line-height:13px;transform:scaleX(0.9940);color:#000;width:195.78px;overflow:hidden;">Result</span>
<span style="left:213.20px;top:67.15px;font-size:14px;line-height:16px;transform:scaleX(0.9796);color:#000;font-weight:bold;">T2124 - Statement of Business Activities</span>
<span style="left:461.20px;top:94.15px;font-size:14px;line-height:16px;transform:scaleX(0.9573);color:#000;font-weight:bold;">Others</span>
<span style="left:515.20px;top:94.15px;font-size:14px;line-height:16px;transform:scaleX(1.0278);color:#000;font-weight:bold;">Details</span>
<span style="left:573.70px;top:94.15px;font-size:14px;line-height:16px;transform:scaleX(0.9807);color:#000;font-weight:bold;">Motor Vehicle Expenses</span>
<span style="left:213.20px;top:92.15px;font-size:14px;line-height:16px;transform:scaleX(0.9762);color:#000;font-weight:bold;">Identification, Income and Expenses</span>
<span style="left:252.20px;top:159.84px;font-size:12px;line-height:14px;transform:scaleX(0.8969);color:#000;-webkit-text-stroke-width:0.1px;">Income</span>
<span style="left:252.20px;top:185.84px;font-size:12px;line-height:14px;transform:scaleX(0.8622);color:#000;-webkit-text-stroke-width:0.1px;">Sales, commissions, or fees</span>
<span style="left:846.60px;top:185.84px;font-size:12px;line-height:14px;transform:scaleX(0.8600);color:#000;-webkit-text-stroke-width:0.25px;">a</span>
<span style="left:889.40px;top:185.84px;font-size:12px;line-height:14px;transform:scaleX(0.8600);color:#000;-webkit-text-stroke-width:0.25px;">0.00</span>
<span style="left:252.20px;top:206.84px;font-size:12px;line-height:14px;transform:scaleX(0.8683);color:#000;-webkit-text-stroke-width:0.1px;">Minus</span>
<span style="left:295.20px;top:206.84px;font-size:12px;line-height:14px;transform:scaleX(0.8882);color:#000;-webkit-text-stroke-width:0.1px;">- Goods and services tax/harmonized sales tax (GST/HST) and provincial sales tax</span>
<span style="left:300.70px;top:227.84px;font-size:12px;line-height:14px;transform:scaleX(0.8907);color:#000;-webkit-text-stroke-width:0.1px;">(if included in fees above)</span>
<span style="left:764.10px;top:227.84px;font-size:12px;line-height:14px;transform:scaleX(0.8600);color:#000;-webkit-text-stroke-width:0.25px;">0.00</span>
<span style="left:295.20px;top:248.84px;font-size:12px;line-height:14px;transform:scaleX(0.8861);color:#000;-webkit-text-stroke-width:0.1px;">- Returns, allowance, and discounts (if included in sales above)</span>
<span style="left:764.10px;top:248.84px;font-size:12px;line-height:14px;transform:scaleX(0.8600);color:#000;-webkit-text-stroke-width:0.25px;">0.00</span>
<span style="left:615.20px;top:269.84px;font-size:12px;line-height:14px;transform:scaleX(0.9070);color:#000;-webkit-text-stroke-width:0.1px;">Total of the above two lines</span>
<span style="left:764.10px;top:269.84px;font-size:12px;line-height:14px;transform:scaleX(0.8600);color:#808080;-webkit-text-stroke-width:0.25px;">0.00</span>
<span style="left:847.00px;top:269.84px;font-size:12px;line-height:14px;transform:scaleX(0.8600);color:#000;-webkit-text-stroke-width:0.25px;">b  -</span>
<span style="left:890.10px;top:269.84px;font-size:12px;line-height:14px;transform:scaleX(0.8600);color:#808080;-webkit-text-stroke-width:0.25px;">0.00</span>
<span style="left:603.95px;top:290.84px;font-size:12px;line-height:14px;transform:scaleX(0.8657);color:#000;-webkit-text-stroke-width:0.1px;">Net sales, commissions, or fees (line a minus b)</span>
<span style="left:847.00px;top:290.84px;font-size:12px;line-height:14px;transform:scaleX(0.8600);color:#000;-webkit-text-stroke-width:0.25px;">8000</span>
<span style="left:890.10px;top:290.84px;font-size:12px;line-height:14px;transform:scaleX(0.8600);color:#808080;-webkit-text-stroke-width:0.25px;">0.00</span>
<span style="left:252.20px;top:311.84px;font-size:12px;line-height:14px;transform:scaleX(0.8863);color:#000;-webkit-text-stroke-width:0.1px;">Reserves deducted last year</span>
<span style="left:847.00px;top:311.84px;font-size:12px;line-height:14px;transform:scaleX(0.8600);color:#000;-webkit-text-stroke-width:0.25px;">8290</span>
<span style="left:890.10px;top:311.84px;font-size:12px;line-height:14px;transform:scaleX(0.8600);color:#000;-webkit-text-stroke-width:0.25px;">0.00</span>
<span style="left:252.20px;top:332.84px;font-size:12px;line-height:14px;transform:scaleX(0.8718);color:#000;-webkit-text-stroke-width:0.1px;">Other income</span>
<span style="left:847.00px;top:332.84px;font-size:12px;line-height:14px;transform:scaleX(0.8600);color:#000;-webkit-text-stroke-width:0.25px;">8230</span>
<span style="left:890.10px;top:332.84px;font-size:12px;line-height:14px;transform:scaleX(0.8600);color:#000;-webkit-text-stroke-width:0.25px;">0.00</span>
<span style="left:408.70px;top:354.84px;font-size:12px;line-height:14px;transform:scaleX(0.8780);color:#000;-webkit-text-stroke-width:0.1px;">Gross income (total of the above three lines) - Enter on line 162 of your income tax return</span>
<span style="left:847.00px;top:354.84px;font-size:12px;line-height:14px;transform:scaleX(0.8600);color:#000;-webkit-text-stroke-width:0.25px;">8299  c</span>
<span style="left:890.10px;top:354.84px;font-size:12px;line-height:14px;transform:scaleX(0.8600);color:#808080;-webkit-text-stroke-width:0.25px;">0.00</span>
<span style="left:252.20px;top:381.84px;font-size:12px;line-height:14px;transform:scaleX(0.8773);color:#000;-webkit-text-stroke-width:0.1px;">Calculation of cost of goods sold (enter business part only)</span>
<span style="left:252.20px;top:406.84px;font-size:12px;line-height:14px;transform:scaleX(0.8770);color:#000;-webkit-text-stroke-width:0.1px;">Opening inventory (include raw materials, goods in process, and finished goods)</span>
<span style="left:721.00px;top:406.84px;font-size:12px;line-height:14px;transform:scaleX(0.8600);color:#000;-webkit-text-stroke-width:0.25px;">8300</span>
<span style="left:764.10px;top:406.84px;font-size:12px;line-height:14px;transform:scaleX(0.8600);color:#000;-webkit-text-stroke-width:0.25px;">0.00</span>
<span style="left:252.20px;top:427.84px;font-size:12px;line-height:14px;transform:scaleX(0.8805);color:#000;-webkit-text-stroke-width:0.1px;">Purchases during the year (net of returns, allowances, and discounts)</span>
<span style="left:721.00px;top:427.84px;font-size:12px;line-height:14px;transform:scaleX(0.8600);color:#000;-webkit-text-stroke-width:0.25px;">8320</span>
<span style="left:764.10px;top:427.84px;font-size:12px;line-height:14px;transform:scaleX(0.8600);color:#000;-webkit-text-stroke-width:0.25px;">0.00</span>
<span style="left:252.20px;top:448.84px;font-size:12px;line-height:14px;transform:scaleX(0.8965);color:#000;-webkit-text-stroke-width:0.1px;">Subcontracts</span>
<span style="left:721.00px;top:448.84px;font-size:12px;line-height:14px;transform:scaleX(0.8600);color:#000;-webkit-text-stroke-width:0.25px;">8360</span>
<span style="left:764.10px;top:448.84px;font-size:12px;line-height:14px;transform:scaleX(0.8600);color:#000;-webkit-text-stroke-width:0.25px;">0.00</span>
<span style="left:252.20px;top:469.84px;font-size:12px;line-height:14px;transform:scaleX(0.9007);color:#000;-webkit-text-stroke-width:0.1px;">Direct wage costs</span>
<span style="left:721.00px;top:469.84px;font-size:12px;line-height:14px;transform:scaleX(0.8600);color:#000;-webkit-text-stroke-width:0.25px;">8340</span>
<span style="left:764.10px;top:469.84px;font-size:12px;line-height:14px;transform:scaleX(0.8600);color:#000;-webkit-text-stroke-width:0.25px;">0.00</span>
<span style="left:252.20px;top:490.84px;font-size:12px;line-height:14px;transform:scaleX(0.8768);color:#000;-webkit-text-stroke-width:0.1px;">Other costs</span>
<span style="left:721.00px;top:490.84px;font-size:12px;line-height:14px;transform:scaleX(0.8600);color:#000;-webkit-text-stroke-width:0.25px;">8450</span>
<span style="left:764.10px;top:490.84px;font-size:12px;line-height:14px;transform:scaleX(0.8600);color:#000;-webkit-text-stroke-width:0.25px;">0.00</span>
<span style="left:522.90px;top:511.84px;font-size:12px;line-height:14px;transform:scaleX(0.9077);color:#000;-webkit-text-stroke-width:0.1px;">Total of the above five lines</span>
<span style="left:764.10px;top:511.84px;font-size:12px;line-height:14px;transform:scaleX(0.8600);color:#808080;-webkit-text-stroke-width:0.25px;">0.00</span>
<span style="left:252.20px;top:532.84px;font-size:12px;line-height:14px;transform:scaleX(0.8741);color:#000;-webkit-text-stroke-width:0.1px;">Minus - Closing inventory (include raw materials, goods in process, and finished goods)</span>
<span style="left:721.00px;top:532.84px;font-size:12px;line-height:14px;transform:scaleX(0.8600);color:#000;-webkit-text-stroke-width:0.25px;">8500</span>
<span style="left:764.10px;top:532.84px;font-size:12px;line-height:14px;transform:scaleX(0.8600);color:#000;-webkit-text-stroke-width:0.25px;">0.00</span>
<span style="left:568.00px;top:553.84px;font-size:12px;line-height:14px;transform:scaleX(0.8732);color:#000;-webkit-text-stroke-width:0.1px;">Cost of goods sold</span>
<span style="left:721.00px;top:553.84px;font-size:12px;line-height:14px;transform:scaleX(0.8600);color:#000;-webkit-text-stroke-width:0.25px;">8518</span>
<span style="left:764.10px;top:553.84px;font-size:12px;line-height:14px;transform:scaleX(0.8600);color:#808080;-webkit-text-stroke-width:0.25px;">0.00</span>
<span style="left:846.00px;top:553.84px;font-size:12px;line-height:14px;transform:scaleX(0.8600);color:#000;-webkit-text-stroke-width:0.25px;">===&gt;  d</span>
<span style="left:889.10px;top:553.84px;font-size:12px;line-height:14px;transform:scaleX(0.8600);color:#808080;-webkit-text-stroke-width:0.25px;">0.00</span>
<span style="left:693.20px;top:575.84px;font-size:12px;line-height:14px;transform:scaleX(0.8732);color:#000;-webkit-text-stroke-width:0.1px;">Cost of goods sold</span>
<span style="left:846.00px;top:575.84px;font-size:12px;line-height:14px;transform:scaleX(0.8600);color:#000;-webkit-text-stroke-width:0.25px;">8519  e</span>
<span style="left:889.10px;top:575.84px;font-size:12px;line-height:14px;transform:scaleX(0.8600);color:#808080;-webkit-text-stroke-width:0.25px;">0.00</span>
<span style="left:252.20px;top:610.84px;font-size:12px;line-height:14px;transform:scaleX(0.8682);color:#000;-webkit-text-stroke-width:0.1px;">Expenses (enter business part only)</span>
<span style="left:252.20px;top:636.84px;font-size:12px;line-height:14px;transform:scaleX(0.8758);color:#000;-webkit-text-stroke-width:0.1px;">Advertising</span>
<span style="left:721.00px;top:636.84px;font-size:12px;line-height:14px;transform:scaleX(0.8600);color:#000;-webkit-text-stroke-width:0.25px;">8521</span>
<span style="left:764.10px;top:636.84px;font-size:12px;line-height:14px;transform:scaleX(0.8600);color:#000;-webkit-text-stroke-width:0.25px;">0.00</span>
<span style="left:252.20px;top:657.84px;font-size:12px;line-height:14px;transform:scaleX(0.8900);color:#000;-webkit-text-stroke-width:0.1px;">Bad debts</span>
<span style="left:721.00px;top:657.84px;font-size:12px;line-height:14px;transform:scaleX(0.8600);color:#000;-webkit-text-stroke-width:0.25px;">8590</span>
<span style="left:764.10px;top:657.84px;font-size:12px;line-height:14px;transform:scaleX(0.8600);color:#000;-webkit-text-stroke-width:0.25px;">0.00</span>
<span style="left:252.20px;top:679.84px;font-size:12px;line-height:14px;transform:scaleX(0.8728);color:#000;-webkit-text-stroke-width:0.1px;">Business tax, fees, licenses, dues, memberships, and subscriptions</span>
<span style="left:721.00px;top:679.84px;font-size:12px;line-height:14px;transform:scaleX(0.8600);color:#000;-webkit-text-stroke-width:0.25px;">8760</span>
<span style="left:764.10px;top:679.84px;font-size:12px;line-height:14px;transform:scaleX(0.8600);color:#000;-webkit-text-stroke-width:0.25px;">0.00</span>
<span style="left:1.40px;top:725.69px;font-size:11px;line-height:13px;transform:scaleX(0.9120);color:#000;">Ready</span>
<span style="left:265.20px;top:724.84px;font-size:12px;line-height:14px;transform:scaleX(0.8774);color:#000;-webkit-text-stroke-width:0.1px;">Licensed (60)</span>
<span style="left:351.20px;top:724.84px;font-size:12px;line-height:14px;transform:scaleX(0.9007);color:#000;-webkit-text-stroke-width:0.1px;">[Total Income]=319748.50 [Net Income]=221868.45 [Taxable Income]=218524.45 [Balance Due]=52617.79</span>
<span style="left:937.20px;top:724.84px;font-size:12px;line-height:14px;transform:scaleX(0.8830);color:#808080;-webkit-text-stroke-width:0.1px;">CAP</span>
<span style="left:965.20px;top:724.84px;font-size:12px;line-height:14px;transform:scaleX(0.8709);color:#000;-webkit-text-stroke-width:0.1px;">NUM</span>
<span style="left:995.20px;top:724.84px;font-size:12px;line-height:14px;transform:scaleX(0.8996);color:#808080;-webkit-text-stroke-width:0.1px;">SCRL</span>
</div>
</body></html>
